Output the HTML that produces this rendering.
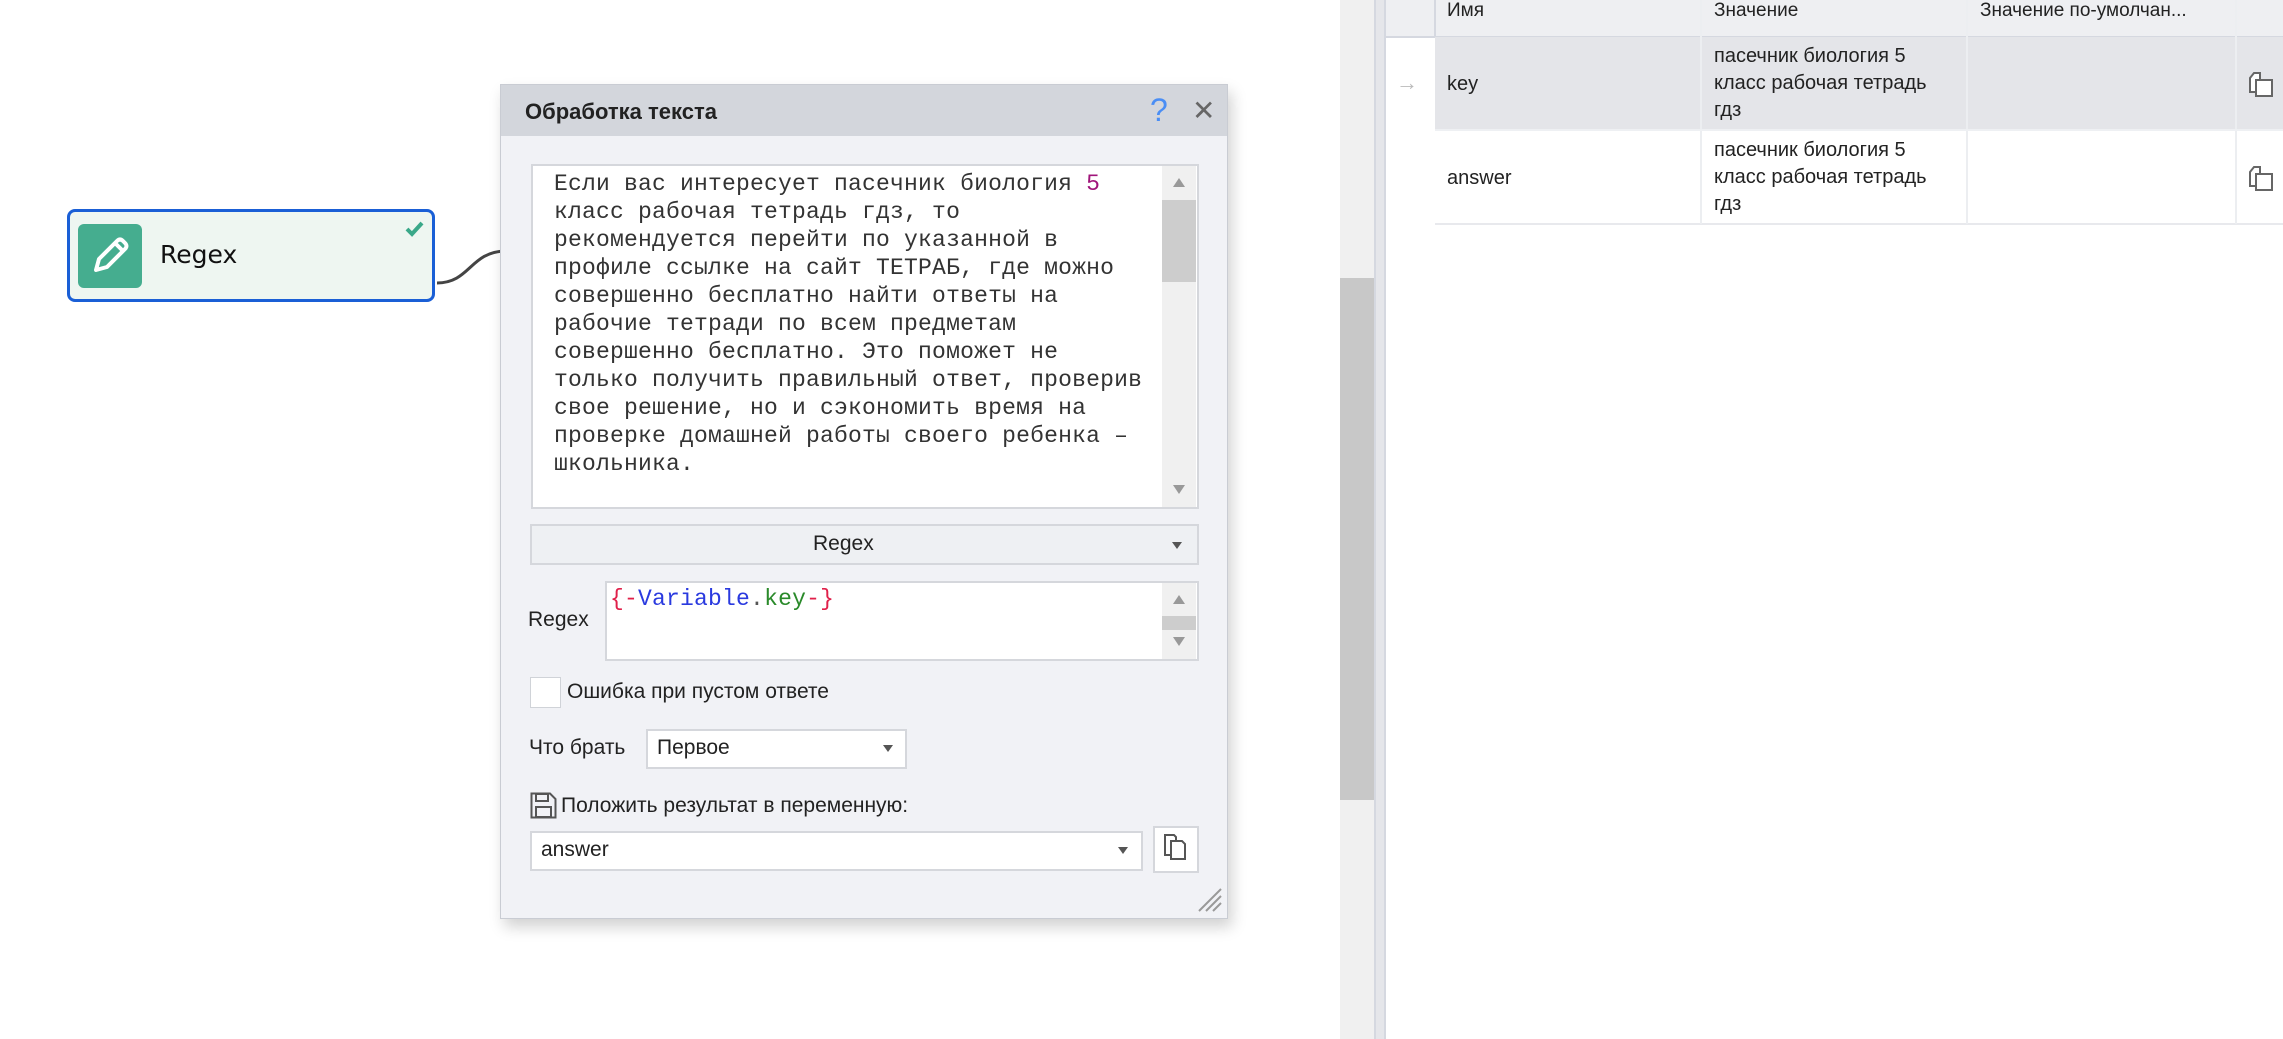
<!DOCTYPE html>
<html><head><meta charset="utf-8"><style>
body{margin:0;width:2283px;height:1039px;background:#fff;position:relative;overflow:hidden;font-family:"Liberation Sans",sans-serif;color:#222}
.a{position:absolute}
.mono{font-family:"Liberation Mono",monospace;font-size:23px;color:#333;letter-spacing:0.2px}
.sans{font-size:21px}
.tri{width:0;height:0;border-left:6px solid transparent;border-right:6px solid transparent;position:absolute}
.dn{border-top:7px solid #555}
.up{border-bottom:9px solid #999}
.dn2{border-top:9px solid #999}
</style></head><body>
<svg class="a" style="left:0;top:0" width="560" height="320"><path d="M437 283 C470 283 470 252 505 251" stroke="#444" stroke-width="3" fill="none"/></svg>
<div class="a" style="left:67px;top:209px;width:362px;height:87px;border:3px solid #1a5fd6;border-radius:8px;background:#eef6f1"></div>
<div class="a" style="left:78px;top:224px;width:64px;height:64px;background:#45ad8f;border-radius:6px"></div>
<svg class="a" style="left:78px;top:224px" width="64" height="64"><path d="M18 46 L21 35 L39 17 Q42 14 45 17 L47 19 Q50 22 47 25 L29 43 Z M37 19 L45 27" stroke="#fff" stroke-width="4" fill="none" stroke-linejoin="round"/></svg>
<div class="a" style="left:160px;top:240px;font-size:25px;font-family:'DejaVu Sans',sans-serif;color:#111">Regex</div>
<svg class="a" style="left:402px;top:218px" width="26" height="22"><path d="M5 11 L10 16 L20 5" stroke="#3aa889" stroke-width="4" fill="none"/></svg>

<div class="a" style="left:500px;top:84px;width:726px;height:833px;background:#f1f2f6;border:1px solid #c9ccd3;box-shadow:4px 8px 14px rgba(0,0,0,.18)"></div>
<div class="a" style="left:501px;top:85px;width:726px;height:51px;background:#d3d6dc"></div>
<div class="a" style="left:525px;top:99px;font-size:22px;font-weight:bold;color:#222">Обработка текста</div>
<div class="a" style="left:1150px;top:92px;font-size:32px;color:#4a8ef5">?</div>
<div class="a" style="left:1192px;top:94px;font-size:28px;color:#666">✕</div>

<div class="a" style="left:531px;top:164px;width:664px;height:341px;background:#fff;border:2px solid #d5d7dc"></div>
<div class="a" style="left:1162px;top:166px;width:34px;height:341px;background:#f0f0f0"></div>
<div class="a" style="left:1162px;top:200px;width:34px;height:82px;background:#cdcdcd"></div>
<div class="tri up" style="left:1173px;top:178px"></div>
<div class="tri dn2" style="left:1173px;top:485px"></div>
<div class="a mono" style="left:554px;top:170px;line-height:28px;white-space:pre">Если вас интересует пасечник биология <span style="color:#a0147a">5</span>
класс рабочая тетрадь гдз, то
рекомендуется перейти по указанной в
профиле ссылке на сайт ТЕТРАБ, где можно
совершенно бесплатно найти ответы на
рабочие тетради по всем предметам
совершенно бесплатно. Это поможет не
только получить правильный ответ, проверив
свое решение, но и сэкономить время на
проверке домашней работы своего ребенка –
школьника.</div>

<div class="a" style="left:530px;top:524px;width:665px;height:37px;background:#eef0f3;border:2px solid #d5d7dc"></div>
<div class="a sans" style="left:813px;top:532px">Regex</div>
<div class="tri dn" style="left:1172px;top:542px;border-left-width:5px;border-right-width:5px"></div>

<div class="a sans" style="left:528px;top:608px">Regex</div>
<div class="a" style="left:605px;top:581px;width:590px;height:76px;background:#fff;border:2px solid #d5d7dc"></div>
<div class="a" style="left:1162px;top:583px;width:34px;height:76px;background:#f0f0f0"></div>
<div class="a" style="left:1162px;top:616px;width:34px;height:14px;background:#cdcdcd"></div>
<div class="tri up" style="left:1173px;top:595px"></div>
<div class="tri dn2" style="left:1173px;top:637px"></div>
<div class="a mono" style="left:610px;top:586px"><span style="color:#e0204a">{-</span><span style="color:#2a3adf">Variable</span><span style="color:#555">.</span><span style="color:#2a8a2a">key</span><span style="color:#e0204a">-}</span></div>

<div class="a" style="left:530px;top:677px;width:29px;height:29px;background:#fff;border:1px solid #d0d3d8"></div>
<div class="a sans" style="left:567px;top:680px">Ошибка при пустом ответе</div>

<div class="a sans" style="left:529px;top:736px">Что брать</div>
<div class="a" style="left:646px;top:729px;width:257px;height:36px;background:#fff;border:2px solid #d5d7dc"></div>
<div class="a sans" style="left:657px;top:736px">Первое</div>
<div class="tri dn" style="left:883px;top:745px;border-left-width:5px;border-right-width:5px"></div>

<svg class="a" style="left:530px;top:792px" width="27" height="27"><path d="M1.5 1.5 H20 L25.5 7 V25.5 H1.5 Z" stroke="#555" stroke-width="2" fill="none"/><rect x="6" y="2" width="12" height="7" stroke="#555" stroke-width="2" fill="none"/><rect x="6" y="15" width="15" height="10" stroke="#555" stroke-width="2" fill="none"/></svg>
<div class="a sans" style="left:561px;top:794px">Положить результат в переменную:</div>

<div class="a" style="left:530px;top:831px;width:609px;height:36px;background:#fff;border:2px solid #d5d7dc"></div>
<div class="a sans" style="left:541px;top:838px">answer</div>
<div class="tri dn" style="left:1118px;top:847px;border-left-width:5px;border-right-width:5px"></div>
<div class="a" style="left:1153px;top:826px;width:42px;height:43px;background:#fff;border:2px solid #d5d7dc"></div>
<svg class="a" style="left:1163px;top:833px" width="26" height="30"><path d="M2 2 H11 L13 4 V22 H2 Z" stroke="#555" stroke-width="2" fill="#fff"/><path d="M8 8 H19 L22 11 V26 H8 Z" stroke="#555" stroke-width="2" fill="#fff"/></svg>
<svg class="a" style="left:1196px;top:886px" width="28" height="28"><path d="M3 25 L25 3 M10 25 L25 10 M17 25 L25 17" stroke="#999" stroke-width="2"/></svg>

<div class="a" style="left:1340px;top:0;width:34px;height:1039px;background:#f0f0f0"></div>
<div class="a" style="left:1340px;top:278px;width:34px;height:522px;background:#c8c8c8"></div>
<div class="a" style="left:1374px;top:0;width:12px;height:1039px;background:#e5e6ea;border-left:2px solid #d5d8e0;border-right:2px solid #d5d8e0;box-sizing:border-box"></div>
<div class="a" style="left:1386px;top:0;width:897px;height:36px;background:#eeeff2;border-bottom:2px solid #d5d8e0"></div>
<div class="a" style="left:1435px;top:37px;width:848px;height:92px;background:#e4e5e9"></div>
<div class="a" style="left:1435px;top:131px;width:848px;height:92px;background:#fff;border-bottom:2px solid #e8e9ed"></div>
<div class="a" style="left:1434px;top:0;width:2px;height:36px;background:#d5d8e0"></div>
<div class="a" style="left:1700px;top:0;width:2px;height:224px;background:#eceef1"></div>
<div class="a" style="left:1966px;top:0;width:2px;height:224px;background:#eceef1"></div>
<div class="a" style="left:2235px;top:0;width:2px;height:224px;background:#eceef1"></div>
<div class="a" style="left:1435px;top:129px;width:848px;height:2px;background:#eef0f3"></div>
<div class="a" style="left:1447px;top:0;font-size:19px;line-height:22px">Имя</div>
<div class="a" style="left:1714px;top:0;font-size:19px;line-height:22px">Значение</div>
<div class="a" style="left:1980px;top:0;font-size:19px;line-height:22px">Значение по-умолчан...</div>
<div class="a" style="left:1396px;top:70px;font-size:22px;color:#bbb">→</div>
<div class="a" style="left:1447px;top:73px;font-size:20px">key</div>
<div class="a" style="left:1447px;top:167px;font-size:20px">answer</div>
<div class="a" style="left:1714px;top:43px;font-size:20px;line-height:27px">пасечник биология 5<br>класс рабочая тетрадь<br>гдз</div>
<div class="a" style="left:1714px;top:137px;font-size:20px;line-height:27px">пасечник биология 5<br>класс рабочая тетрадь<br>гдз</div>
<svg class="a" style="left:2248px;top:70px" width="30" height="30"><path d="M2 8 L6 3 H12 V22 H2 Z" stroke="#666" stroke-width="2" fill="#fff"/><path d="M8 10 H24 V26 H8 Z" stroke="#666" stroke-width="2" fill="#fff"/></svg>
<svg class="a" style="left:2248px;top:164px" width="30" height="30"><path d="M2 8 L6 3 H12 V22 H2 Z" stroke="#666" stroke-width="2" fill="#fff"/><path d="M8 10 H24 V26 H8 Z" stroke="#666" stroke-width="2" fill="#fff"/></svg>
</body></html>
